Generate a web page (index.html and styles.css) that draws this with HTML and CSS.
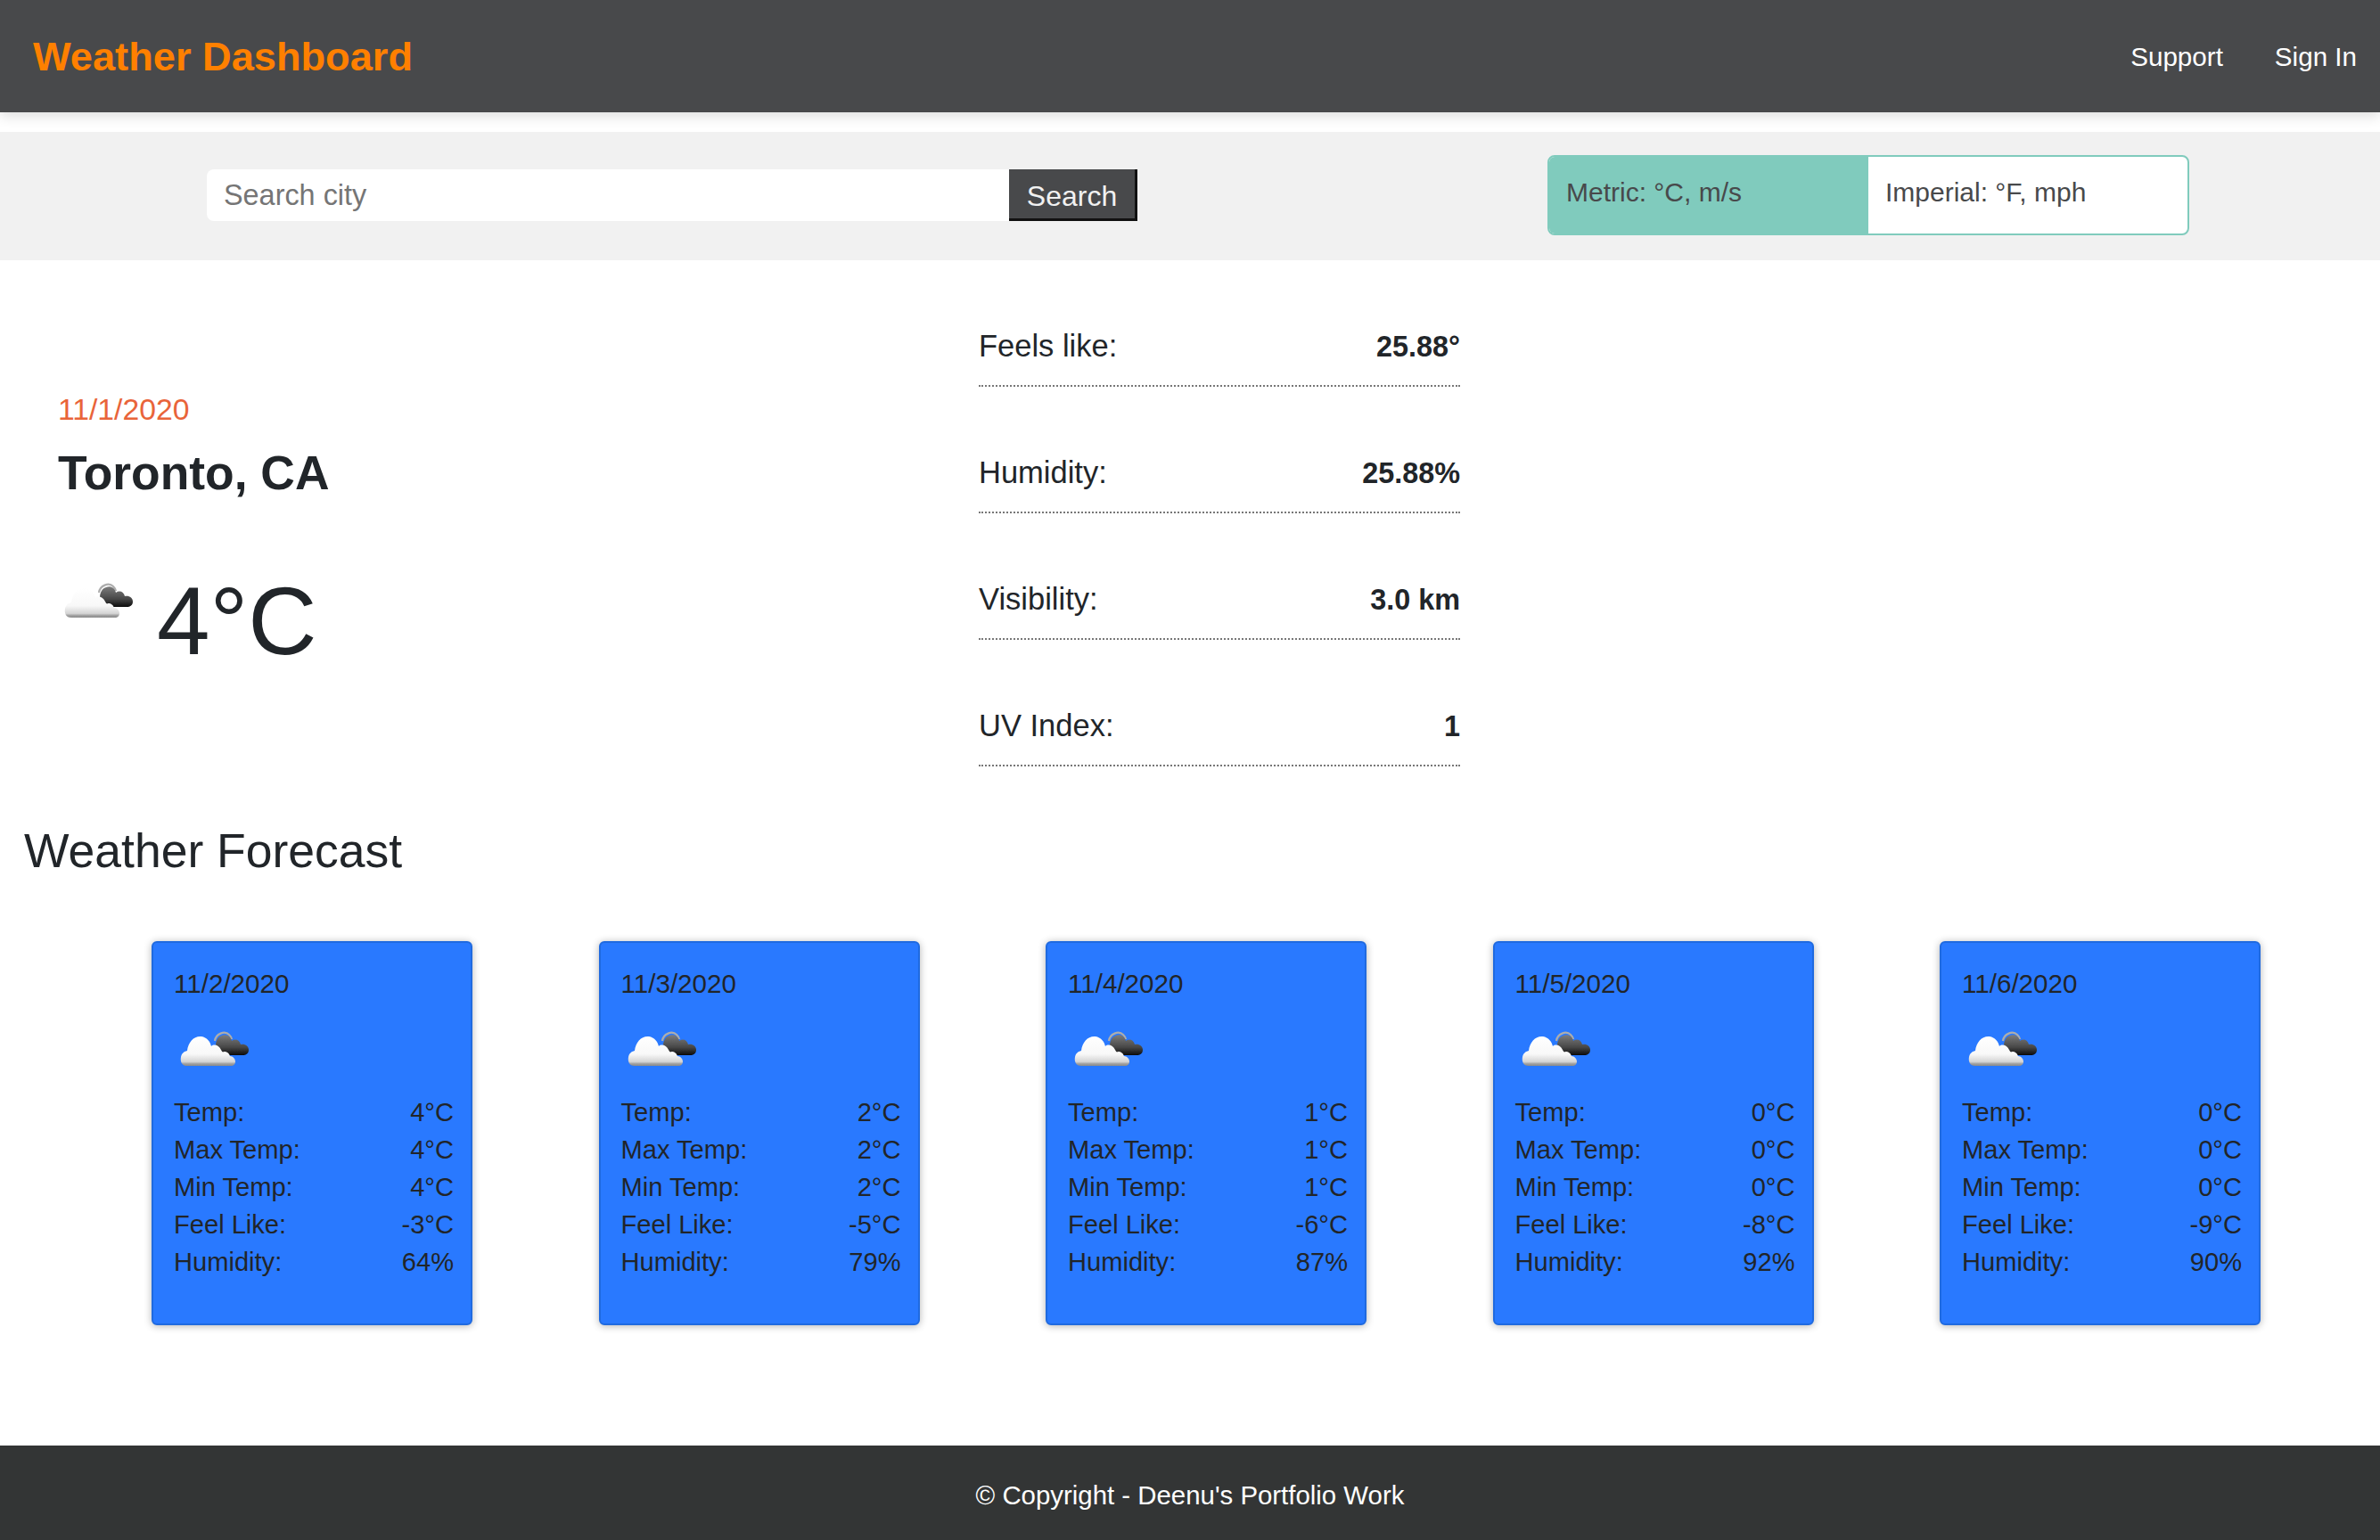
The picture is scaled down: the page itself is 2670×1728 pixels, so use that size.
FILE: index.html
```html
<!DOCTYPE html>
<html lang="en">
<head>
  <meta charset="UTF-8" />
  <title>Weather Dashboard</title>
  <link rel="stylesheet" href="styles.css">
</head>
<body>
  <svg class="sprite" width="0" height="0">
    <defs>
      <linearGradient id="whiteFill" x1="0" y1="0" x2="0" y2="1">
        <stop offset="0" stop-color="#ffffff" />
        <stop offset="0.6" stop-color="#f8f8f8" />
        <stop offset="0.86" stop-color="#d4d4d4" />
        <stop offset="0.93" stop-color="#a0a0a0" />
        <stop offset="1" stop-color="#8a8a8a" />
      </linearGradient>
      <linearGradient id="darkFill" x1="0" y1="0" x2="0" y2="1">
        <stop offset="0" stop-color="#7c7c7c" />
        <stop offset="0.6" stop-color="#484848" />
        <stop offset="1" stop-color="#0a0a0a" />
      </linearGradient>
      <filter id="soft" x="-5%" y="-5%" width="110%" height="110%">
        <feGaussianBlur stdDeviation="0.4" />
      </filter>
      <symbol id="clouds" viewBox="0 0 80 44">
        <g filter="url(#soft)">
          <path d="M41 12 C42 4 52 0 57 5 C59 7 60 8 60 10" fill="none" stroke="#adadad" stroke-width="2.2" />
          <path d="M44 27 C40 18 42 8 49 6 C54 4 59 7 60 12 C64 9 69 11 70 16 C75 15 79 18 79 22 C79 26 76 28 72 28 L50 28 Z" fill="url(#darkFill)" />
          <path d="M10 40 C4 40 2 35 3 30 C4 26 6 24 10 23 C11 13 18 6 26 7 C32 8 36 13 37 18 C40 15 46 17 48 22 C49 24 50 25 51 24 C55 24 57 26 58 29 C61 29 64 32 64 35 C64 38 62 40 59 40 Z" fill="url(#whiteFill)" />
        </g>
      </symbol>
    </defs>
  </svg>

  <header class="topbar">
    <a class="brand">Weather Dashboard</a>
    <nav class="topnav">
      <a>Support</a>
      <a>Sign In</a>
    </nav>
  </header>

  <section class="toolbar">
    <form class="search">
      <input class="search-input" type="text" placeholder="Search city" />
      <button class="search-btn" type="button">Search</button>
    </form>
    <div class="units">
      <span class="unit unit-active">Metric: °C, m/s</span>
      <span class="unit">Imperial: °F, mph</span>
    </div>
  </section>

  <main class="current">
    <div class="summary">
      <div class="summary-date">11/1/2020</div>
      <h2 class="summary-city">Toronto, CA</h2>
      <div class="summary-temp">
        <svg class="cloud-icon"><use href="#clouds" /></svg>
        <span>4°C</span>
      </div>
    </div>
    <ul class="details">
      <li><span>Feels like:</span><b>25.88°</b></li>
      <li><span>Humidity:</span><b>25.88%</b></li>
      <li><span>Visibility:</span><b>3.0 km</b></li>
      <li><span>UV Index:</span><b>1</b></li>
    </ul>
  </main>

  <section class="forecast">
    <h2 class="forecast-title">Weather Forecast</h2>
    <div class="cards">
      <article class="card">
        <div class="card-date">11/2/2020</div>
        <svg class="cloud-icon card-icon"><use href="#clouds" /></svg>
        <dl class="card-rows">
          <div><dt>Temp:</dt><dd>4°C</dd></div>
          <div><dt>Max Temp:</dt><dd>4°C</dd></div>
          <div><dt>Min Temp:</dt><dd>4°C</dd></div>
          <div><dt>Feel Like:</dt><dd>-3°C</dd></div>
          <div><dt>Humidity:</dt><dd>64%</dd></div>
        </dl>
      </article>
      <article class="card">
        <div class="card-date">11/3/2020</div>
        <svg class="cloud-icon card-icon"><use href="#clouds" /></svg>
        <dl class="card-rows">
          <div><dt>Temp:</dt><dd>2°C</dd></div>
          <div><dt>Max Temp:</dt><dd>2°C</dd></div>
          <div><dt>Min Temp:</dt><dd>2°C</dd></div>
          <div><dt>Feel Like:</dt><dd>-5°C</dd></div>
          <div><dt>Humidity:</dt><dd>79%</dd></div>
        </dl>
      </article>
      <article class="card">
        <div class="card-date">11/4/2020</div>
        <svg class="cloud-icon card-icon"><use href="#clouds" /></svg>
        <dl class="card-rows">
          <div><dt>Temp:</dt><dd>1°C</dd></div>
          <div><dt>Max Temp:</dt><dd>1°C</dd></div>
          <div><dt>Min Temp:</dt><dd>1°C</dd></div>
          <div><dt>Feel Like:</dt><dd>-6°C</dd></div>
          <div><dt>Humidity:</dt><dd>87%</dd></div>
        </dl>
      </article>
      <article class="card">
        <div class="card-date">11/5/2020</div>
        <svg class="cloud-icon card-icon"><use href="#clouds" /></svg>
        <dl class="card-rows">
          <div><dt>Temp:</dt><dd>0°C</dd></div>
          <div><dt>Max Temp:</dt><dd>0°C</dd></div>
          <div><dt>Min Temp:</dt><dd>0°C</dd></div>
          <div><dt>Feel Like:</dt><dd>-8°C</dd></div>
          <div><dt>Humidity:</dt><dd>92%</dd></div>
        </dl>
      </article>
      <article class="card">
        <div class="card-date">11/6/2020</div>
        <svg class="cloud-icon card-icon"><use href="#clouds" /></svg>
        <dl class="card-rows">
          <div><dt>Temp:</dt><dd>0°C</dd></div>
          <div><dt>Max Temp:</dt><dd>0°C</dd></div>
          <div><dt>Min Temp:</dt><dd>0°C</dd></div>
          <div><dt>Feel Like:</dt><dd>-9°C</dd></div>
          <div><dt>Humidity:</dt><dd>90%</dd></div>
        </dl>
      </article>
    </div>
  </section>

  <footer class="footer">© Copyright - Deenu's Portfolio Work</footer>
</body>
</html>
```

FILE: styles.css
```css
* {
  box-sizing: border-box;
}
html, body {
  height: 100%;
}
body {
  margin: 0;
  display: flex;
  flex-direction: column;
  min-height: 1728px;
  font-family: "Liberation Sans", Arial, sans-serif;
  font-size: 32px;
  color: #212529;
  background: #fff;
}
.sprite {
  display: block;
  height: 0;
}

.topbar {
  height: 126px;
  flex: none;
  display: flex;
  justify-content: space-between;
  align-items: center;
  padding: 2px 26px 0 37px;
  background: #48494b;
  box-shadow: 0 4px 14px rgba(0, 0, 0, 0.14);
}
.brand {
  font-size: 45.2px;
  font-weight: bold;
  color: #ff8000;
}
.topnav {
  display: flex;
  gap: 58px;
  font-size: 29.6px;
  color: #fff;
}

.toolbar {
  height: 144px;
  flex: none;
  margin-top: 22px;
  display: flex;
  align-items: center;
  padding: 0 0 2px 232px;
  background: #f1f1f1;
}
.search {
  display: flex;
  width: 1044px;
  height: 58px;
}
.search-input {
  flex: 1;
  min-width: 0;
  padding: 0 19px;
  border: 0;
  border-radius: 8px 0 0 8px;
  background: #fff;
  font: 32.4px "Liberation Sans", Arial, sans-serif;
}
.search-input::placeholder {
  color: #757575;
  opacity: 1;
}
.search-btn {
  width: 144px;
  padding: 5px 0 0;
  border: 0;
  border-right: 3px solid #111;
  border-bottom: 3px solid #111;
  background: #48494b;
  color: #f1f1f1;
  font: 32px "Liberation Sans", Arial, sans-serif;
}
.units {
  display: flex;
  width: 720px;
  height: 90px;
  margin-left: 460px;
  border: 2px solid #80cbbd;
  border-radius: 8px;
  overflow: hidden;
  background: #fff;
  font-size: 30px;
  color: #48494b;
}
.unit {
  flex: 1;
  display: flex;
  align-items: center;
  padding: 0 0 6px 19px;
}
.unit-active {
  background: #80cbbd;
}

.current {
  display: flex;
  flex: none;
}
.summary {
  width: 1098px;
  padding: 147px 0 0 65px;
}
.summary-date {
  font-size: 33.7px;
  line-height: 40px;
  color: #e9643a;
}
.summary-city {
  margin: 20px 0 0;
  font-size: 53.4px;
  line-height: 64px;
  font-weight: bold;
}
.summary-temp {
  display: flex;
  align-items: flex-start;
  margin-top: 74px;
  padding-left: 5px;
  font-size: 107px;
  line-height: 120px;
}
.cloud-icon {
  width: 80px;
  height: 44px;
  flex: none;
}
.summary-temp .cloud-icon {
  margin: 16px 26px 0 0;
}
.details {
  width: 540px;
  margin: 0;
  padding: 0;
  list-style: none;
  font-size: 34.5px;
}
.details b {
  font-size: 32.4px;
}
.details li {
  height: 142px;
  display: flex;
  justify-content: space-between;
  align-items: baseline;
  padding-top: 76px;
  line-height: 40px;
  border-bottom: 2px dotted #777;
}

.forecast {
  flex: none;
}
.forecast-title {
  margin: 62px 0 0 27px;
  font-size: 53.5px;
  line-height: 66px;
  font-weight: normal;
}
.cards {
  display: flex;
  gap: 141.5px;
  margin-top: 68px;
  padding-left: 170px;
}
.card {
  width: 360px;
  height: 431px;
  flex: none;
  padding: 26px 19px 0 23px;
  border: 2px solid #1f6ae0;
  border-radius: 6px;
  background: #2979ff;
  box-shadow: 0 1px 8px rgba(0, 0, 0, 0.3);
  font-size: 29.1px;
}
.card-date {
  font-size: 29.6px;
  line-height: 40px;
}
.card-icon {
  display: block;
  margin: 32px 0 0 5px;
}
.card-rows {
  margin: 28px 0 0;
  line-height: 41.9px;
}
.card-rows div {
  display: flex;
  justify-content: space-between;
}
.card-rows dt,
.card-rows dd {
  margin: 0;
}

.footer {
  margin-top: auto;
  height: 106px;
  flex: none;
  display: flex;
  justify-content: center;
  align-items: center;
  padding-top: 5px;
  background: #333535;
  color: #fff;
  font-size: 29.4px;
}
```
